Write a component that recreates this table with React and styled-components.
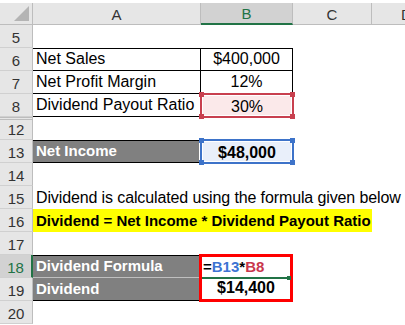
import React from "react";
import styled, { createGlobalStyle, css } from "styled-components";

const GlobalStyle = createGlobalStyle`
  html, body {
    margin: 0;
    padding: 0;
    background: #fff;
    overflow: hidden;
  }
  body {
    font-family: "Liberation Sans", Arial, sans-serif;
  }
`;

const Viewport = styled.div`
  width: 405px;
  height: 325px;
  overflow: hidden;
`;

const Sheet = styled.div`
  display: grid;
  grid-template-columns: 33px 168px 92px 79px 70px;
  grid-template-rows: 22px repeat(13, 23px);
  width: 442px;
  margin-top: 3px;
  color: #000;
  font-size: 16px;
`;

const Corner = styled.div`
  position: relative;
  background: #e6e6e6;
  border-right: 1px solid #bdbdbd;
  border-bottom: 1px solid #bdbdbd;
  box-sizing: border-box;

  &::after {
    content: "";
    position: absolute;
    right: 3px;
    bottom: 3px;
    border-style: solid;
    border-width: 0 0 15px 15px;
    border-color: transparent transparent #b4b4b4 transparent;
  }
`;

const ColHead = styled.div`
  display: flex;
  align-items: center;
  justify-content: center;
  box-sizing: border-box;
  padding-top: 1px;
  font-size: 15px;
  background: ${(p) => (p.$active ? "#d2d2d2" : "#e6e6e6")};
  color: ${(p) => (p.$active ? "#217346" : "#333")};
  border-right: 1px solid #bdbdbd;
  border-bottom: ${(p) => (p.$active ? "2px solid #217346" : "1px solid #bdbdbd")};
`;

const RowHead = styled.div`
  display: flex;
  align-items: center;
  justify-content: center;
  box-sizing: border-box;
  padding-top: 2px;
  font-size: 15px;
  background: ${(p) => (p.$active ? "#d2d2d2" : "#e6e6e6")};
  color: ${(p) => (p.$active ? "#217346" : "#333")};
  border-right: ${(p) => (p.$active ? "2px solid #217346" : "1px solid #bdbdbd")};
  border-bottom: 1px solid #d0d0d0;
  ${(p) =>
    p.$afterHidden &&
    css`
      border-top: 3px double #bdbdbd;
      padding-top: 0;
    `}
`;

const Cell = styled.div`
  display: flex;
  align-items: flex-end;
  justify-content: ${(p) => (p.$center ? "center" : "flex-start")};
  box-sizing: border-box;
  padding: 0 3px 2px;
  line-height: 18px;
  white-space: nowrap;
  font-weight: ${(p) => (p.$bold ? 700 : 400)};
  grid-column: span ${(p) => p.$span || 1};
`;

const Note = styled(Cell)`
  letter-spacing: -0.12px;
`;

const TableCell = styled(Cell)`
  border-right: 1px solid #000;
  border-bottom: 1px solid #000;
  ${(p) => p.$first && css`border-top: 1px solid #000;`}
`;

const DarkCell = styled(Cell)`
  background: #808080;
  color: #fff;
  font-size: 15px;
  font-weight: 700;
  margin-right: 2px;
  border-top: ${(p) => (p.$topLine ? "1px solid #000" : "none")};
  border-bottom: ${(p) => (p.$bottomLine ? "1px solid #000" : "1px solid #bfbfbf")};
`;

const Highlight = styled(Cell)`
  background: #ffff00;
  font-size: 15px;
  font-weight: 700;
`;

const tones = {
  red: { line: "#c8404f", fill: "#fbe9ea" },
  blue: { line: "#3d73c9", fill: "#e9effa" },
};

const SelectedCell = styled(Cell)`
  position: relative;
  z-index: 2;
  margin: -1px;
  background: ${(p) => tones[p.$tone].fill};
  border: 2px solid ${(p) => tones[p.$tone].line};
  box-shadow: inset 0 0 0 1px #fff, 0 0 0 1px #fff;
  padding-bottom: 0;
`;

const Handle = styled.span`
  position: absolute;
  width: 5px;
  height: 5px;
  background: ${(p) => tones[p.$tone].line};
  ${(p) => (p.$top ? "top: -3px;" : "bottom: -3px;")}
  ${(p) => (p.$left ? "left: -3px;" : "right: -3px;")}
`;

const FormulaBox = styled.div`
  position: relative;
  z-index: 3;
  grid-row: span 2;
  display: flex;
  flex-direction: column;
  margin: -1px 0 -1px -2px;
  border: 3px solid #ff0000;
  font-weight: 700;
`;

const FormulaLine = styled.div`
  position: relative;
  flex: 1;
  display: flex;
  align-items: flex-end;
  padding: 0 0 1px 1px;
  font-size: 15px;
  line-height: 18px;
  border-bottom: 2px solid #217346;
`;

const FillHandle = styled.span`
  position: absolute;
  right: -1px;
  bottom: -3px;
  width: 4px;
  height: 4px;
  background: #217346;
`;

const ResultLine = styled.div`
  flex: 1;
  display: flex;
  align-items: flex-end;
  justify-content: center;
  padding-bottom: 2px;
  line-height: 18px;
`;

const Ref = styled.span`
  color: ${(p) => p.$color};
`;

const corners = [
  { $top: true, $left: true },
  { $top: true },
  { $left: true },
  {},
];

function Handles({ tone }) {
  return corners.map((c, i) => <Handle key={i} $tone={tone} {...c} />);
}

export default function App() {
  return (
    <>
      <GlobalStyle />
      <Viewport>
        <Sheet>
          <Corner />
          <ColHead>A</ColHead>
          <ColHead $active>B</ColHead>
          <ColHead>C</ColHead>
          <ColHead>D</ColHead>

          <RowHead>5</RowHead>
          <Cell $span={4} />

          <RowHead>6</RowHead>
          <TableCell $first>Net Sales</TableCell>
          <TableCell $first $center>$400,000</TableCell>
          <Cell $span={2} />

          <RowHead>7</RowHead>
          <TableCell>Net Profit Margin</TableCell>
          <TableCell $center>12%</TableCell>
          <Cell $span={2} />

          <RowHead>8</RowHead>
          <TableCell>Dividend Payout Ratio</TableCell>
          <SelectedCell $tone="red" $center>
            30%
            <Handles tone="red" />
          </SelectedCell>
          <Cell $span={2} />

          <RowHead $afterHidden>12</RowHead>
          <Cell $span={4} />

          <RowHead>13</RowHead>
          <DarkCell $topLine $bottomLine>Net Income</DarkCell>
          <SelectedCell $tone="blue" $center $bold>
            $48,000
            <Handles tone="blue" />
          </SelectedCell>
          <Cell $span={2} />

          <RowHead>14</RowHead>
          <Cell $span={4} />

          <RowHead>15</RowHead>
          <Note $span={4}>Dividend is calculated using the formula given below</Note>

          <RowHead>16</RowHead>
          <Highlight $span={3}>Dividend = Net Income * Dividend Payout Ratio</Highlight>
          <Cell />

          <RowHead>17</RowHead>
          <Cell $span={4} />

          <RowHead $active>18</RowHead>
          <DarkCell $topLine>Dividend Formula</DarkCell>
          <FormulaBox>
            <FormulaLine>
              =<Ref $color="#3d74d3">B13</Ref>*<Ref $color="#c9374d">B8</Ref>
              <FillHandle />
            </FormulaLine>
            <ResultLine>$14,400</ResultLine>
          </FormulaBox>
          <Cell $span={2} />

          <RowHead>19</RowHead>
          <DarkCell $bottomLine>Dividend</DarkCell>
          <Cell $span={2} />

          <RowHead>20</RowHead>
          <Cell $span={4} />
        </Sheet>
      </Viewport>
    </>
  );
}
